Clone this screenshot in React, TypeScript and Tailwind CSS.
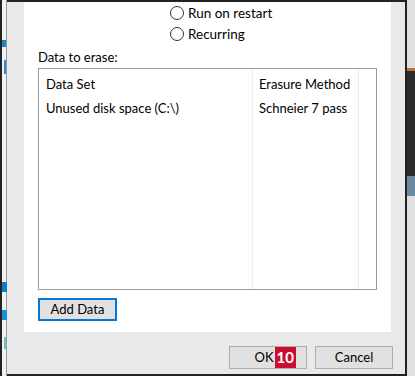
export default function App() {
  const font = { fontFamily: 'Lato, "Liberation Sans", sans-serif' };
  return (
    <div className="flex h-[376px] w-[415px] overflow-hidden bg-[#1e1e1e] text-[13px] text-black" style={font}>
      {/* left strip from window behind */}
      <div className="relative w-[7px] shrink-0 border-l-2 border-r border-l-[#222] border-r-[#9a9a9a] bg-[#f2f2f2]">
        <div className="absolute left-0 top-[40px] h-[7px] w-[4px] bg-[#1a86c8]" />
        <div className="absolute left-[2px] top-[60px] h-[14px] w-[2px] bg-[#2a8bd0]" />
        <div className="absolute left-0 top-[282px] h-[10px] w-[5px] bg-[#0a7cc4]" />
        <div className="absolute left-0 top-[310px] h-[10px] w-[5px] bg-[#1690d8]" />
        <div className="absolute left-[2px] top-[337px] h-[12px] w-[2px] bg-[#6cc0c0]" />
      </div>

      {/* dialog */}
      <div className="flex w-[398px] shrink-0 flex-col border-t-2 border-[#222] bg-[#e9e9e9]">
        <div className="ml-[17px] mr-[14px] flex h-[330px] flex-col bg-white px-[14px]">
          <div className="ml-[132px] mt-[4px] flex flex-col gap-[7px] text-[13.5px]">
            <label className="flex h-[14px] items-center gap-[4px]">
              <span className="h-[14px] w-[14px] rounded-full border border-[#333]" />
              <span>Run on restart</span>
            </label>
            <label className="flex h-[14px] items-center gap-[4px]">
              <span className="h-[14px] w-[14px] rounded-full border border-[#333]" />
              <span>Recurring</span>
            </label>
          </div>

          <div className="mt-[8px] h-[16px] leading-[16px]">Data to erase:</div>

          <div className="mt-[3px] flex h-[222px] border border-[#9b9b9b]">
            <div className="flex w-[214px] flex-col border-r border-[#e3eef8] pl-[7px] pt-[3px]">
              <div className="h-[24px] leading-[24px]">Data Set</div>
              <div className="h-[24px] leading-[24px]">Unused disk space (C:\)</div>
            </div>
            <div className="flex w-[106px] flex-col border-r border-[#e3eef8] pl-[6px] pt-[3px]">
              <div className="h-[24px] leading-[24px]">Erasure Method</div>
              <div className="h-[24px] leading-[24px]">Schneier 7 pass</div>
            </div>
            <div className="flex-1" />
          </div>

          <button className="mt-[8px] flex h-[23px] w-[79px] items-center justify-center border-2 border-[#0a78d2] bg-[#e1e1e1]">
            Add Data
          </button>
        </div>

        <div className="mr-[12px] mt-[14px] flex justify-end gap-[8px]">
          <button className="flex h-[23px] w-[78px] items-center justify-end border border-[#adadad] bg-[#e1e1e1] pr-[10px]">
            <span>OK</span>
            <span className="ml-[1px] bg-[#c8102e] px-[2px] text-[15px] font-bold leading-[21px] text-white">10</span>
          </button>
          <button className="flex h-[23px] w-[78px] items-center justify-center border border-[#adadad] bg-[#e1e1e1]">
            Cancel
          </button>
        </div>
        <div className="flex-1" />
        <div className="h-[2px] bg-[#222]" />
      </div>

      {/* right strip */}
      <div className="flex flex-1 flex-col border-l-2 border-[#222] bg-[#3a3a3a]">
        <div className="h-[68px] bg-[#e0e0e0]" />
        <div className="h-[3px] bg-[#c07030]" />
        <div className="h-[105px] bg-[#2a2a2a]" />
        <div className="h-[20px] bg-[#6a8aa0]" />
        <div className="flex-1 bg-[#e0e0e0]" />
      </div>
    </div>
  );
}
